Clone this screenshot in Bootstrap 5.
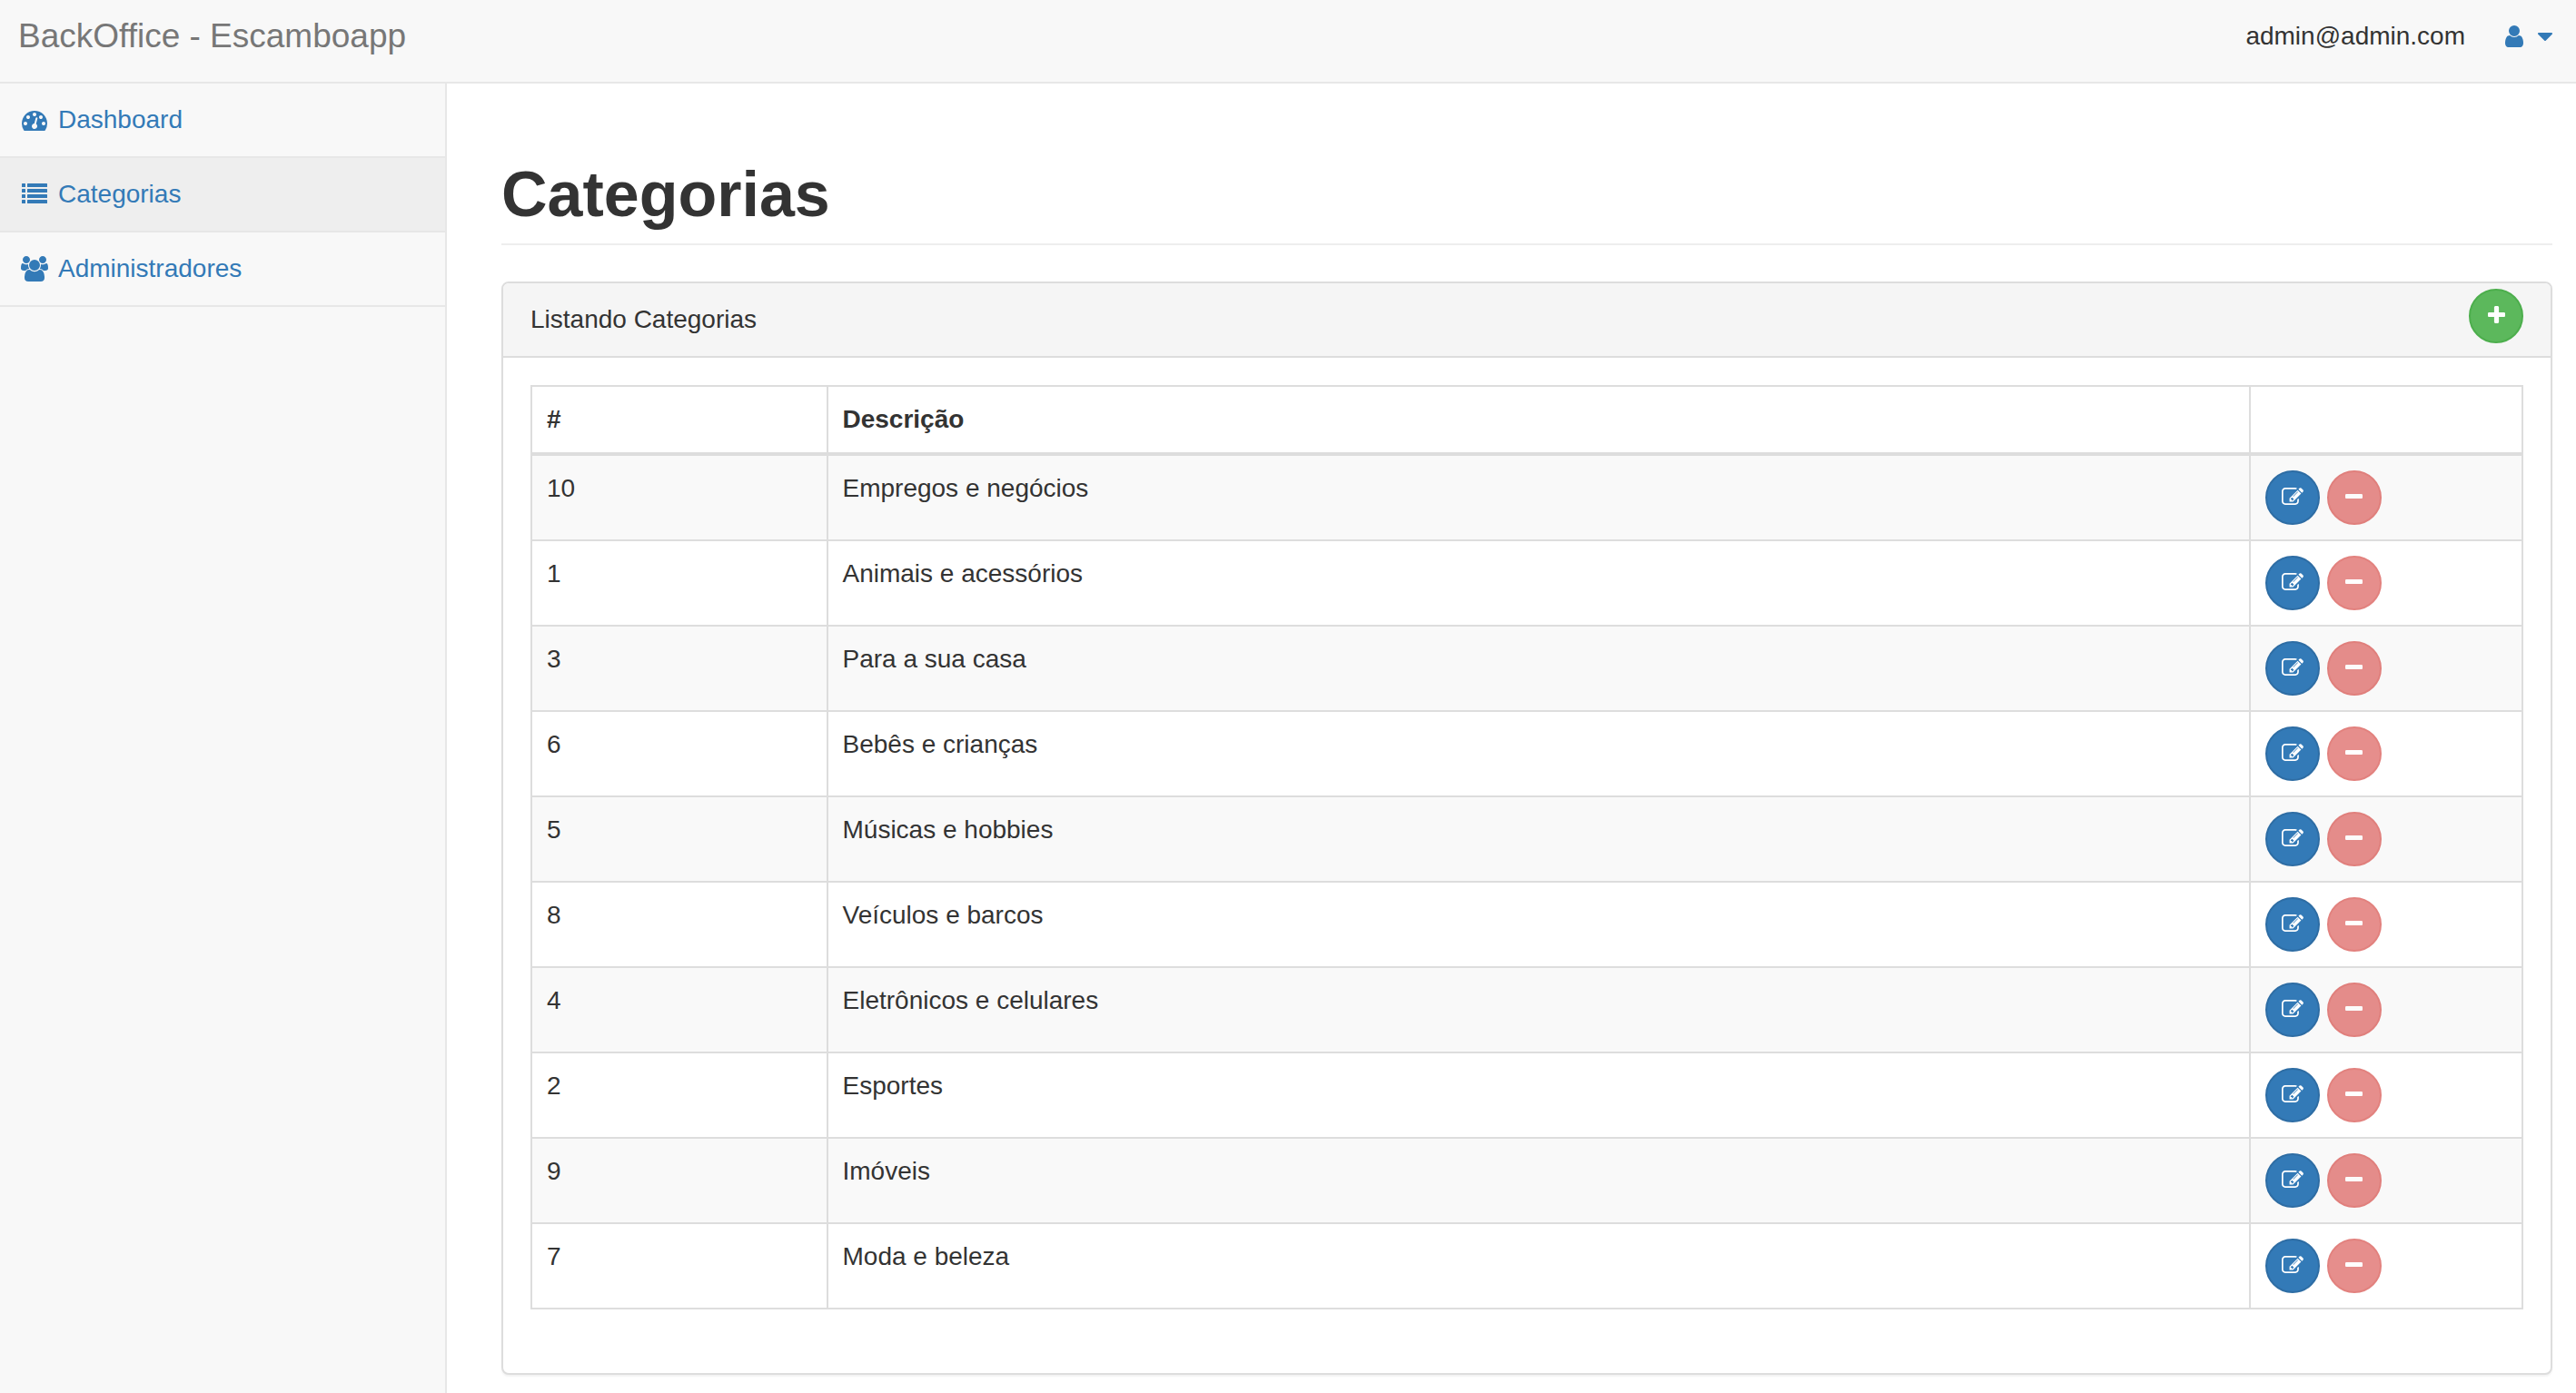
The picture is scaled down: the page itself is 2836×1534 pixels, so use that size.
<!DOCTYPE html>
<html lang="pt-BR">
<head>
<meta charset="utf-8">
<meta name="viewport" content="width=device-width, initial-scale=1">
<title>BackOffice - Escamboapp</title>
<link href="https://cdn.jsdelivr.net/npm/bootstrap@5.3.0/dist/css/bootstrap.min.css" rel="stylesheet">
<style>
  body { font-family: "Liberation Sans", Arial, sans-serif; font-size: 28px; line-height: 40px; color: #333; background: #fff; }
  a { color: #337ab7; text-decoration: none; }
  svg { display: block; fill: currentColor; flex: none; }

  .topbar { --bs-navbar-padding-y: 0; padding: 20px 26px 30px 20px; background: #f8f8f8; border-bottom: 2px solid #e7e7e7; }
  .topbar .navbar-brand { --bs-navbar-brand-font-size: 37px; --bs-navbar-brand-color: #777; padding: 0; margin: 0; line-height: 40px; }
  .user-area { gap: 44px; }
  .user-toggle { gap: 16px; height: 40px; color: #337ab7; background: none; border: 0; padding: 0; }

  .side-menu { flex: 0 0 492px; min-height: calc(100vh - 92px); background: #f8f8f8; border-right: 2px solid #e7e7e7; }
  .side-menu .nav-link { display: flex; align-items: center; gap: 8px; padding: 20px; color: #337ab7; border-bottom: 2px solid #e7e7e7; }
  .side-menu .nav-link.active { background: #eee; }
  .menu-icon { width: 36px; height: 28px; }

  .content-area { padding: 82px 26px 20px 60px; min-width: 0; }
  .page-title { font-size: 70px; line-height: 80px; font-weight: 700; padding-bottom: 14px; margin: 0 0 40px; border-bottom: 2px solid #eee; }

  .panel-box { --bs-card-border-width: 2px; --bs-card-border-color: #ddd; --bs-card-border-radius: 8px; --bs-card-inner-border-radius: 6px; --bs-card-cap-bg: #f5f5f5; --bs-card-cap-padding-y: 20px; --bs-card-cap-padding-x: 30px; --bs-card-spacer-y: 30px; --bs-card-spacer-x: 30px; box-shadow: 0 2px 2px rgba(0, 0, 0, .05); }

  .round-btn { display: flex; align-items: center; justify-content: center; width: 60px; height: 60px; padding: 0 0 3px; border: 2px solid; border-radius: 50%; color: #fff; }
  .round-btn:hover { color: #fff; }
  .btn-add { background: #5cb85c; border-color: #4cae4c; margin: -14px 0 -6px; }
  .btn-edit { background: #337ab7; border-color: #2e6da4; }
  .btn-remove { background: #d9534f; border-color: #d43f3a; opacity: .65; }

  .list-table { --bs-table-color: #333; --bs-table-striped-color: #333; --bs-table-striped-bg: #f9f9f9; --bs-table-bg: transparent; table-layout: fixed; margin-bottom: 40px; color: #333; }
  .list-table > :not(caption) > tr { border-width: 0; }
  .list-table > :not(caption) > tr > * { padding: 16px; border: 2px solid #ddd; }
  .list-table > thead > tr > th { border-bottom-width: 4px; }
  .col-id { width: 14.85%; }
  .col-actions { width: 13.7%; }
</style>
</head>
<body>

<svg width="0" height="0" class="position-absolute" aria-hidden="true">
  <symbol id="i-edit" viewBox="0 0 1792 1408"><path transform="translate(0 1408) scale(1 -1)" d="M888 352l116 116l-152 152l-116 -116v-56h96v-96h56zM1328 1072q-16 16 -33 -1l-350 -350q-17 -17 -1 -33t33 1l350 350q17 17 1 33zM1408 478v-190q0 -119 -84.5 -203.5t-203.5 -84.5h-832q-119 0 -203.5 84.5t-84.5 203.5v832q0 119 84.5 203.5t203.5 84.5h832q63 0 117 -25q15 -7 18 -23q3 -17 -9 -29l-49 -49q-14 -14 -32 -8q-23 6 -45 6h-832q-66 0 -113 -47t-47 -113v-832q0 -66 47 -113t113 -47h832q66 0 113 47t47 113v126q0 13 9 22l64 64q15 15 35 7t20 -29zM1312 1216l288 -288l-672 -672h-288v288zM1756 1084l-92 -92l-288 288l92 92q28 28 68 28t68 -28l152 -152q28 -28 28 -68t-28 -68z"/></symbol>
  <symbol id="i-minus" viewBox="0 0 1408 1408"><path transform="translate(0 1408) scale(1 -1)" d="M1408 800v-192q0 -40 -28 -68t-68 -28h-1216q-40 0 -68 28t-28 68v192q0 40 28 68t68 28h1216q40 0 68 -28t28 -68z"/></symbol>
</svg>

<nav class="navbar topbar d-flex justify-content-between">
  <a class="navbar-brand" href="#">BackOffice - Escamboapp</a>
  <div class="user-area d-flex align-items-center">
    <span>admin@admin.com</span>
    <button type="button" class="user-toggle d-flex align-items-center" data-bs-toggle="dropdown" aria-label="Conta">
      <svg width="20" height="28" viewBox="0 0 1280 1792"><path transform="translate(0 1536) scale(1 -1)" d="M1280 137q0 -109 -62.5 -187t-150.5 -78h-854q-88 0 -150.5 78t-62.5 187q0 85 8.5 160.5t31.5 152t58.5 131t94 89t134.5 34.5q131 -128 313 -128t313 128q76 0 134.5 -34.5t94 -89t58.5 -131t31.5 -152t8.5 -160.5zM1024 1024q0 -159 -112.5 -271.5t-271.5 -112.5t-271.5 112.5t-112.5 271.5t112.5 271.5t271.5 112.5t271.5 -112.5t112.5 -271.5z"/></svg>
      <svg width="16" height="9" viewBox="0 0 1024 576"><path transform="translate(0 896) scale(1 -1)" d="M1024 832q0 -26 -19 -45l-448 -448q-19 -19 -45 -19t-45 19l-448 448q-19 19 -19 45t19 45t45 19h896q26 0 45 -19t19 -45z"/></svg>
    </button>
  </div>
</nav>

<div class="d-flex">
  <aside class="side-menu">
    <nav class="nav flex-column">
      <a class="nav-link" href="#">
        <svg class="menu-icon" viewBox="0 0 1792 1792"><path fill-rule="evenodd" transform="translate(0 1536) scale(1 -1)" d="M384 384q0 53 -37.5 90.5t-90.5 37.5t-90.5 -37.5t-37.5 -90.5t37.5 -90.5t90.5 -37.5t90.5 37.5t37.5 90.5zM576 832q0 53 -37.5 90.5t-90.5 37.5t-90.5 -37.5t-37.5 -90.5t37.5 -90.5t90.5 -37.5t90.5 37.5t37.5 90.5zM1004 351l101 382q6 26 -7.5 48.5t-38.5 29.5t-48 -6.5t-30 -39.5l-101 -382q-60 -5 -107 -43.5t-63 -98.5q-20 -77 20 -146t117 -89t146 20t89 117q16 60 -6 117t-72 91zM1664 384q0 53 -37.5 90.5t-90.5 37.5t-90.5 -37.5t-37.5 -90.5t37.5 -90.5t90.5 -37.5t90.5 37.5t37.5 90.5zM1024 1024q0 53 -37.5 90.5t-90.5 37.5t-90.5 -37.5t-37.5 -90.5t37.5 -90.5t90.5 -37.5t90.5 37.5t37.5 90.5zM1472 832q0 53 -37.5 90.5t-90.5 37.5t-90.5 -37.5t-37.5 -90.5t37.5 -90.5t90.5 -37.5t90.5 37.5t37.5 90.5zM1792 384q0 -261 -141 -483q-19 -29 -54 -29h-1402q-35 0 -54 29q-141 221 -141 483q0 182 71 348t191 286t286 191t348 71t348 -71t286 -191t191 -286t71 -348z"/></svg>
        Dashboard</a>
      <a class="nav-link active" href="#">
        <svg class="menu-icon" viewBox="0 0 1792 1792"><g><rect y="128" width="256" height="256" rx="32"/><rect x="384" y="128" width="1408" height="256" rx="32"/><rect y="512" width="256" height="256" rx="32"/><rect x="384" y="512" width="1408" height="256" rx="32"/><rect y="896" width="256" height="256" rx="32"/><rect x="384" y="896" width="1408" height="256" rx="32"/><rect y="1280" width="256" height="256" rx="32"/><rect x="384" y="1280" width="1408" height="256" rx="32"/></g></svg>
        Categorias</a>
      <a class="nav-link" href="#">
        <svg class="menu-icon" viewBox="0 0 1920 1792"><path transform="translate(0 1536) scale(1 -1)" d="M593 640q-162 -5 -265 -128h-134q-82 0 -138 40.5t-56 118.5q0 353 124 353q6 0 43.5 -21t97.5 -42.5t119 -21.5q67 0 133 23q-5 -37 -5 -66q0 -139 81 -256zM1664 3q0 -120 -73 -189.5t-194 -69.5h-874q-121 0 -194 69.5t-73 189.5q0 53 3.5 103.5t14 109t26.5 108.5t43 97.5t62 81t85.5 53.5t111.5 20q10 0 43 -21.5t73 -48t107 -48t135 -21.5t135 21.5t107 48t73 48t43 21.5q61 0 111.5 -20t85.5 -53.5t62 -81t43 -97.5t26.5 -108.5t14 -109t3.5 -103.5zM640 1280q0 -106 -75 -181t-181 -75t-181 75t-75 181t75 181t181 75t181 -75t75 -181zM1344 896q0 -159 -112.5 -271.5t-271.5 -112.5t-271.5 112.5t-112.5 271.5t112.5 271.5t271.5 112.5t271.5 -112.5t112.5 -271.5zM1920 671q0 -78 -56 -118.5t-138 -40.5h-134q-103 123 -265 128q81 117 81 256q0 29 -5 66q66 -23 133 -23q59 0 119 21.5t97.5 42.5t43.5 21q124 0 124 -353zM1792 1280q0 -106 -75 -181t-181 -75t-181 75t-75 181t75 181t181 75t181 -75t75 -181z"/></svg>
        Administradores</a>
    </nav>
  </aside>

  <main class="content-area flex-grow-1">
    <h1 class="page-title">Categorias</h1>
    <section class="card panel-box">
      <div class="card-header d-flex justify-content-between align-items-start">
        <span>Listando Categorias</span>
        <a href="#" class="round-btn btn-add" aria-label="Adicionar"><svg width="19" height="19" viewBox="0 0 1408 1408"><path transform="translate(0 1408) scale(1 -1)" d="M1408 800v-192q0 -40 -28 -68t-68 -28h-416v-416q0 -40 -28 -68t-68 -28h-192q-40 0 -68 28t-28 68v416h-416q-40 0 -68 28t-28 68v192q0 40 28 68t68 28h416v416q0 40 28 68t68 28h192q40 0 68 -28t28 -68v-416h416q40 0 68 -28t28 -68z"/></svg></a>
      </div>
      <div class="card-body">
        <table class="table table-bordered table-striped list-table">
          <colgroup><col class="col-id"><col><col class="col-actions"></colgroup>
          <thead>
            <tr><th scope="col">#</th><th scope="col">Descrição</th><th></th></tr>
          </thead>
          <tbody>
            <tr><td>10</td><td>Empregos e negócios</td><td><div class="d-flex gap-2"><a href="#" class="round-btn btn-edit" aria-label="Editar"><svg width="24" height="19"><use href="#i-edit"/></svg></a><a href="#" class="round-btn btn-remove" aria-label="Remover"><svg width="19" height="19"><use href="#i-minus"/></svg></a></div></td></tr>
            <tr><td>1</td><td>Animais e acessórios</td><td><div class="d-flex gap-2"><a href="#" class="round-btn btn-edit" aria-label="Editar"><svg width="24" height="19"><use href="#i-edit"/></svg></a><a href="#" class="round-btn btn-remove" aria-label="Remover"><svg width="19" height="19"><use href="#i-minus"/></svg></a></div></td></tr>
            <tr><td>3</td><td>Para a sua casa</td><td><div class="d-flex gap-2"><a href="#" class="round-btn btn-edit" aria-label="Editar"><svg width="24" height="19"><use href="#i-edit"/></svg></a><a href="#" class="round-btn btn-remove" aria-label="Remover"><svg width="19" height="19"><use href="#i-minus"/></svg></a></div></td></tr>
            <tr><td>6</td><td>Bebês e crianças</td><td><div class="d-flex gap-2"><a href="#" class="round-btn btn-edit" aria-label="Editar"><svg width="24" height="19"><use href="#i-edit"/></svg></a><a href="#" class="round-btn btn-remove" aria-label="Remover"><svg width="19" height="19"><use href="#i-minus"/></svg></a></div></td></tr>
            <tr><td>5</td><td>Músicas e hobbies</td><td><div class="d-flex gap-2"><a href="#" class="round-btn btn-edit" aria-label="Editar"><svg width="24" height="19"><use href="#i-edit"/></svg></a><a href="#" class="round-btn btn-remove" aria-label="Remover"><svg width="19" height="19"><use href="#i-minus"/></svg></a></div></td></tr>
            <tr><td>8</td><td>Veículos e barcos</td><td><div class="d-flex gap-2"><a href="#" class="round-btn btn-edit" aria-label="Editar"><svg width="24" height="19"><use href="#i-edit"/></svg></a><a href="#" class="round-btn btn-remove" aria-label="Remover"><svg width="19" height="19"><use href="#i-minus"/></svg></a></div></td></tr>
            <tr><td>4</td><td>Eletrônicos e celulares</td><td><div class="d-flex gap-2"><a href="#" class="round-btn btn-edit" aria-label="Editar"><svg width="24" height="19"><use href="#i-edit"/></svg></a><a href="#" class="round-btn btn-remove" aria-label="Remover"><svg width="19" height="19"><use href="#i-minus"/></svg></a></div></td></tr>
            <tr><td>2</td><td>Esportes</td><td><div class="d-flex gap-2"><a href="#" class="round-btn btn-edit" aria-label="Editar"><svg width="24" height="19"><use href="#i-edit"/></svg></a><a href="#" class="round-btn btn-remove" aria-label="Remover"><svg width="19" height="19"><use href="#i-minus"/></svg></a></div></td></tr>
            <tr><td>9</td><td>Imóveis</td><td><div class="d-flex gap-2"><a href="#" class="round-btn btn-edit" aria-label="Editar"><svg width="24" height="19"><use href="#i-edit"/></svg></a><a href="#" class="round-btn btn-remove" aria-label="Remover"><svg width="19" height="19"><use href="#i-minus"/></svg></a></div></td></tr>
            <tr><td>7</td><td>Moda e beleza</td><td><div class="d-flex gap-2"><a href="#" class="round-btn btn-edit" aria-label="Editar"><svg width="24" height="19"><use href="#i-edit"/></svg></a><a href="#" class="round-btn btn-remove" aria-label="Remover"><svg width="19" height="19"><use href="#i-minus"/></svg></a></div></td></tr>
          </tbody>
        </table>
      </div>
    </section>
  </main>
</div>

<script src="https://cdn.jsdelivr.net/npm/bootstrap@5.3.0/dist/js/bootstrap.bundle.min.js"></script>
</body>
</html>
